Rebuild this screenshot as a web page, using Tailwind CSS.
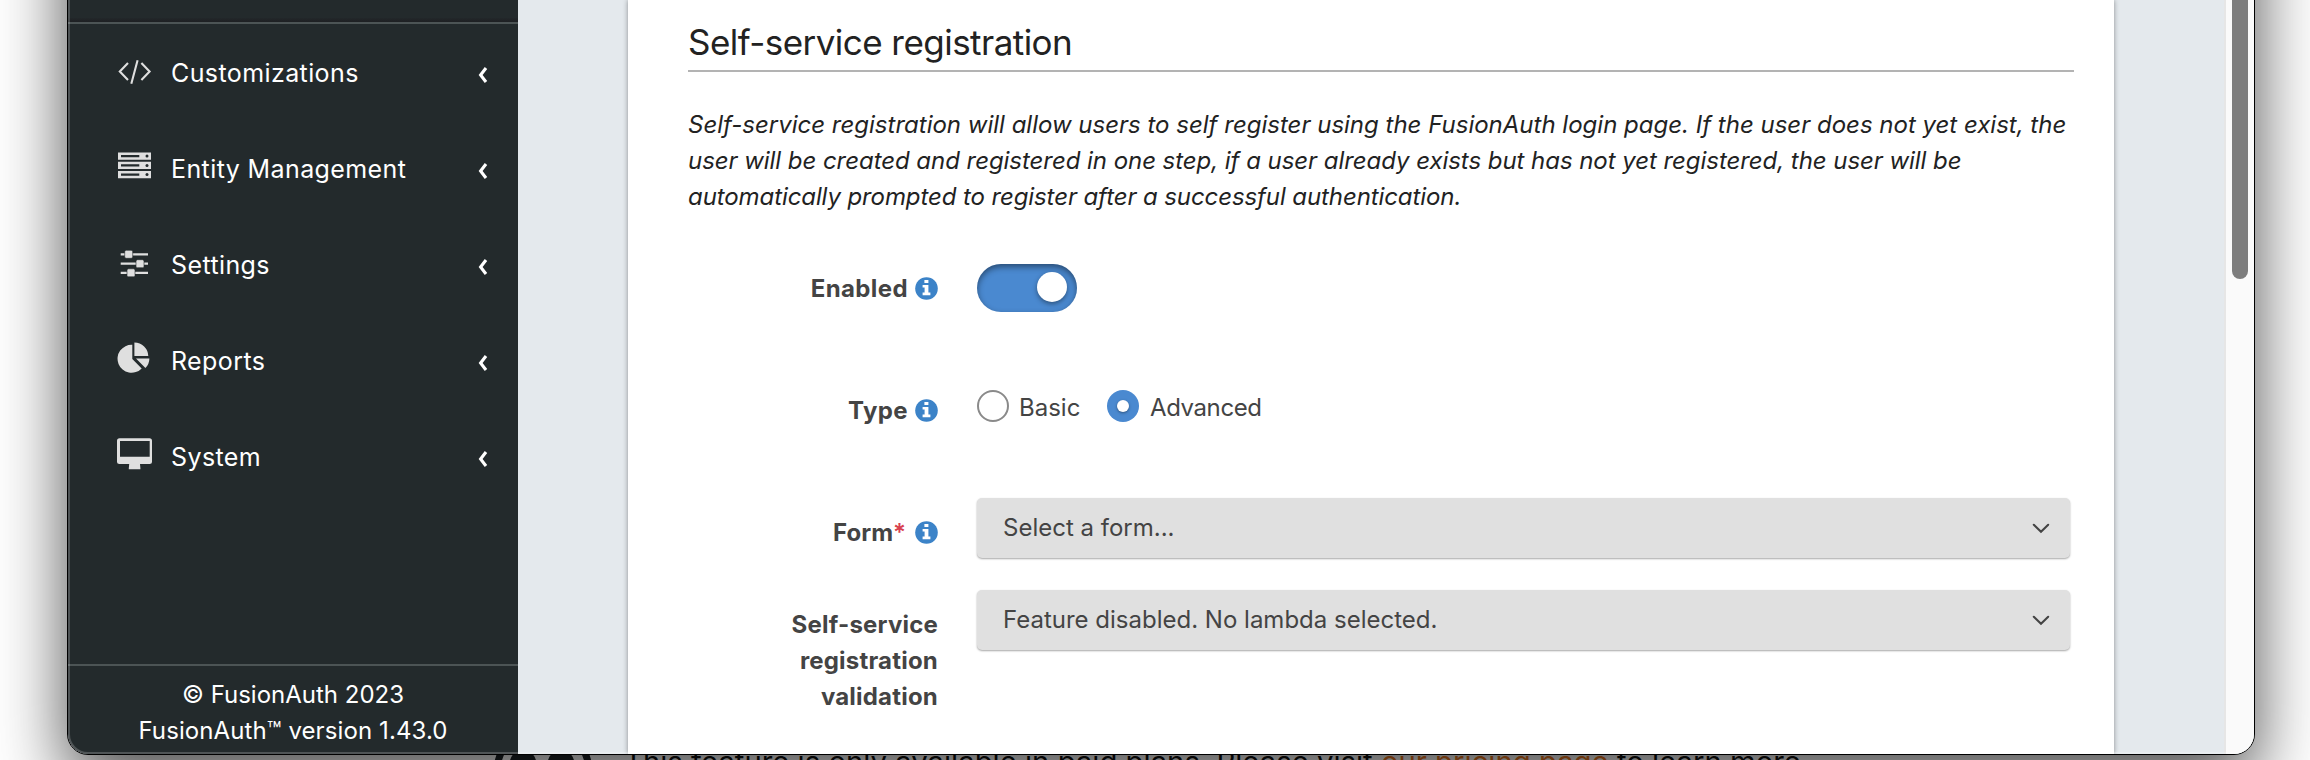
<!DOCTYPE html>
<html lang="en">
<head>
<meta charset="utf-8">
<title>FusionAuth</title>
<script src="https://cdn.jsdelivr.net/npm/@tailwindcss/browser@4"></script>
</head>
<body class="relative h-[760px] w-[2310px] overflow-hidden bg-white font-[Inter,sans-serif]">
<svg class="hidden">
  <symbol id="info" viewBox="0 0 23 23"><circle cx="11.5" cy="11.5" r="11.3" fill="#3c83c8"/><path d="M9.4 2.9h4v3h-4zM7.6 8h5.8v7.600h2v2.600H7.600v-2.600h2v-5h-2z" fill="#fff"/></symbol>
  <symbol id="left" viewBox="0 0 12 18"><path d="M9 2 3.600 9 9 16" fill="none" stroke="#fff" stroke-width="3.1"/></symbol>
  <symbol id="down" viewBox="0 0 18 12"><path d="M1.8 1.8 9 8.8l7.2-7" fill="none" stroke="#444" stroke-width="2.1" stroke-linecap="round"/></symbol>
</svg>

<!-- page behind the window -->
<svg class="absolute left-[490px] top-[720px]" width="110" height="40"><circle cx="53" cy="52" r="46" fill="none" stroke="#1c2326" stroke-width="7"/><ellipse cx="33" cy="47" rx="14" ry="18" fill="#1c2326"/><ellipse cx="71" cy="47" rx="14" ry="18" fill="#1c2326"/></svg>
<p class="absolute left-[624px] top-[744px] text-[29.3px] leading-[36px] whitespace-nowrap text-[#111]">This feature is only available in paid plans. Please visit <span class="text-[#e87722]">our pricing page</span> to learn more.</p>

<div class="relative -mt-[200px] ml-[67px] flex h-[955px] w-[2188px] overflow-hidden rounded-b-[21px] border border-black bg-[#e4e9ed] pt-[199px] shadow-[0_28px_70px_rgba(0,0,0,0.7)]">
  <aside class="flex w-[450px] shrink-0 flex-col bg-[#232a2c] text-white">
    <div class="flex h-6 flex-col justify-end border-b-2 border-[#4c5455]"><div class="h-1 bg-gradient-to-b from-[#22272a] to-[#1e2023]"></div></div>
    <nav class="h-[640px] pt-px text-[25px] tracking-[0.4px]">
      <a class="flex h-24 items-center pl-[49px] pr-[29px]">
        <svg class="mr-[18px]" width="36" height="48" fill="none" stroke="#dfdfdf" stroke-width="2.1"><path d="M11 14 2.8 22.6l8.200 8.400M24.400 14l8.200 8.600-8.200 8.400M20.600 11.200 14.300 34.800"/></svg>
        <span class="flex-1 pt-px">Customizations</span><svg class="relative top-0.5" width="12" height="18"><use href="#left"/></svg>
      </a>
      <a class="flex h-24 items-center pl-[49px] pr-[29px]">
        <svg class="mr-[18px]" width="36" height="48"><g fill="#dfdfdf"><path d="M1 7.500h33v7.200H1zM1 16.800h33V24H1zM1 26h33v7.200H1z"/></g><g fill="#232a2c"><path d="M4 9.900h18.300v2.400H4zM4 19.200h18.300v2.400H4zM4 28.400h18.300v2.400H4z"/><circle cx="30" cy="11.100" r="1.500"/><circle cx="30" cy="20.400" r="1.500"/><circle cx="30" cy="29.600" r="1.500"/></g></svg>
        <span class="flex-1 pt-px">Entity Management</span><svg class="relative top-0.5" width="12" height="18"><use href="#left"/></svg>
      </a>
      <a class="flex h-24 items-center pl-[49px] pr-[29px]">
        <svg class="mr-[18px]" width="36" height="48"><path d="M3.700 13.300H31M3.700 22.700H31M3.700 31.800H31" stroke="#dfdfdf" stroke-width="2.200"/><g fill="#dfdfdf" stroke="#232a2c" stroke-width=".6"><rect x="7.700" y="9.300" width="8" height="8" rx="1.500"/><rect x="19" y="18.700" width="8" height="8" rx="1.500"/><rect x="10" y="27.800" width="8" height="8" rx="1.500"/></g></svg>
        <span class="flex-1 pt-px">Settings</span><svg class="relative top-0.5" width="12" height="18"><use href="#left"/></svg>
      </a>
      <a class="flex h-24 items-center pl-[49px] pr-[29px]">
        <svg class="mr-[18px]" width="36" height="48" fill="#dfdfdf"><path d="M15.300 7.800V22l9.400 9.400A14 14 0 1 1 15.300 7.800zM17.400 5.400A14 14 0 0 1 31.300 19.100H17.400zM19 21.400h13.400a14 14 0 0 1-4 9.600z"/></svg>
        <span class="flex-1 pt-px">Reports</span><svg class="relative top-0.5" width="12" height="18"><use href="#left"/></svg>
      </a>
      <a class="flex h-24 items-center pl-[49px] pr-[29px]">
        <svg class="mr-[18px]" width="36" height="48" fill="#dfdfdf"><path fill-rule="evenodd" d="M2.500 5.200h30a2.500 2.500 0 0 1 2.500 2.500v20.800a2.500 2.500 0 0 1-2.500 2.500H23l.4 4.200v1H11.800v-1l.4-4.200H2.500A2.500 2.500 0 0 1 0 28.500V7.700a2.500 2.500 0 0 1 2.500-2.500zM3 8v15.800h29.700V8z"/></svg>
        <span class="flex-1 pt-px">System</span><svg class="relative top-0.5" width="12" height="18"><use href="#left"/></svg>
      </a>
    </nav>
    <footer class="flex-1 border-t-2 border-[#4c5455] pt-[11px] text-center text-2xl leading-[36px]">
      <p>© FusionAuth 2023</p>
      <p class="tracking-[0.1px]">FusionAuth™ version 1.43.0</p>
    </footer>
  </aside>

  <main class="flex flex-1 pl-[110px]">
    <section class="w-[1486px] bg-white px-[60px] pt-[14px] text-[#444] shadow-[0_0_5px_rgba(0,0,0,0.4)]">
      <h2 class="h-[58px] w-[1386px] border-b-2 border-[#b3b3b3] text-[35px] leading-[56px] tracking-[-0.54px] text-[#222]">Self-service registration</h2>
      <p class="mt-[35px] text-2xl leading-[36px] whitespace-nowrap text-[#222] italic">Self-service registration will allow users to self register using the FusionAuth login page. If the user does not yet exist, the<br><span class="tracking-[-0.05px]">user will be created and registered in one step, if a user already exists but has not yet registered, the user will be</span><br><span class="tracking-[-0.1px]">automatically prompted to register after a successful authentication.</span></p>
      <div class="mt-[49px] flex h-[126px] text-2xl leading-[36px]">
        <label class="flex w-[250px] shrink-0 items-center justify-end gap-[7px] self-start pt-[7px] font-bold tracking-[0.4px]">Enabled<svg class="relative -top-px" width="23" height="23"><use href="#info"/></svg></label>
        <div class="ml-[39px] h-12 w-[100px] rounded-full bg-[#4a89d0] pt-2 pl-[60px] shadow-[inset_0_3px_6px_rgba(0,0,0,0.45)]"><div class="size-[30px] rounded-full bg-white shadow-[0_2px_5px_rgba(0,0,0,0.4)]"></div></div>
      </div>
      <div class="flex h-[108px] text-2xl leading-[36px]">
        <label class="flex w-[250px] shrink-0 items-center justify-end gap-[7px] self-start pt-[3px] font-bold tracking-[0.4px]">Type<svg class="relative -top-px" width="23" height="23"><use href="#info"/></svg></label>
        <div class="ml-[39px] flex items-start">
          <span class="size-8 rounded-full border-2 border-[#8a8a8a]"></span><span class="ml-[10px] w-[88px]">Basic</span>
          <span class="flex size-8 items-center justify-center rounded-full bg-[#4a89d0]"><span class="size-3 rounded-full bg-white shadow-[0_1px_3px_rgba(0,0,0,0.4)]"></span></span><span class="ml-[11px] tracking-[-0.4px]">Advanced</span>
        </div>
      </div>
      <div class="flex h-[92px] text-2xl leading-[36px]">
        <label class="flex w-[250px] shrink-0 items-center justify-end gap-[9px] self-start pt-[17px] font-bold"><span>Form<span class="font-semibold text-[#d8404f]">*</span></span><svg class="relative -top-px" width="23" height="23"><use href="#info"/></svg></label>
        <div class="ml-[39px] flex h-[60px] w-[1093px] shrink-0 items-center justify-between rounded-[5px] bg-[#e0e0e0] pr-[20px] pl-[26px] shadow-[0_1px_2px_rgba(0,0,0,0.35)]">Select a form...<svg class="relative top-px" width="18" height="12"><use href="#down"/></svg></div>
      </div>
      <div class="flex text-2xl leading-[36px]">
        <label class="w-[250px] shrink-0 pt-[17px] text-right font-bold tracking-[0.2px]">Self-service<br>registration<br>validation</label>
        <div class="ml-[39px] flex h-[60px] w-[1093px] shrink-0 items-center justify-between rounded-[5px] bg-[#e0e0e0] pr-[20px] pl-[26px] shadow-[0_1px_2px_rgba(0,0,0,0.35)]">Feature disabled. No lambda selected.<svg class="relative top-px" width="18" height="12"><use href="#down"/></svg></div>
      </div>
    </section>
  </main>
  <div class="w-[30px] border-l-2 border-[#e6e6e6] bg-[#fafafa] pl-[6px]"><div class="h-[279px] w-4 rounded-b-full bg-[#7d7d7d]"></div></div>
  <div class="pointer-events-none absolute inset-0 rounded-b-[20px] border-2 border-white/20"></div>
</div>
</body>
</html>
